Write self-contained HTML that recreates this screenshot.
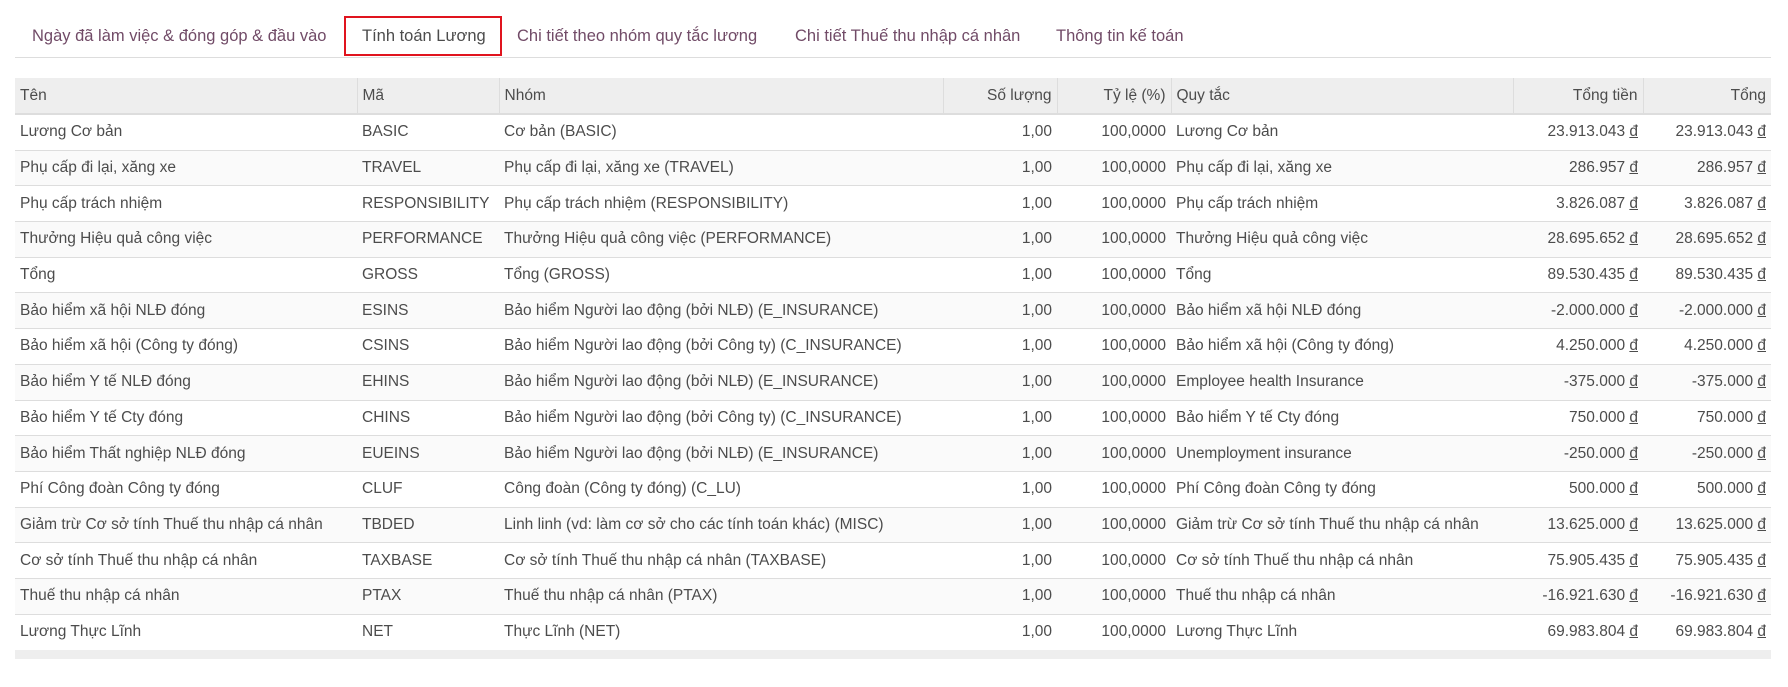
<!DOCTYPE html>
<html><head><meta charset="utf-8"><style>
body{margin:0;background:#fff;font-family:"Liberation Sans","Noto Sans CJK SC",sans-serif;font-size:15.5px;color:#4c4c4c;width:1788px;height:687px;overflow:hidden;position:relative}
.tabs{position:absolute;left:15px;top:0;width:1756px;height:57px;border-bottom:1px solid #ddd}
.tab{position:absolute;top:27px;color:#714b67;white-space:nowrap;font-size:16.5px}
.box{position:absolute;left:344px;top:16px;width:154px;height:36px;border:2px solid #e0141e}
table{position:absolute;left:15px;top:78px;width:1756px;border-collapse:collapse;table-layout:fixed}
th{background:#eee;font-weight:normal;text-align:left;height:35px;padding:0 5px;border-left:1px solid #ddd;border-bottom:2px solid #ddd;white-space:nowrap}
th:first-child{border-left:none}
td{height:34.7px;padding:0 5px;border-top:1px solid #ddd;white-space:nowrap;overflow:hidden}
tr:nth-child(odd) td{background:#fafafa}
.r{text-align:right}
u{text-decoration:underline}
.foot{position:absolute;left:15px;top:650px;width:1756px;height:9px;background:#eee}
</style></head><body>
<div class="tabs"></div>
<div class="tab" style="left:32px">Ngày đã làm việc &amp; đóng góp &amp; đầu vào</div>
<div class="tab" style="left:362px;color:#4c4c4c">Tính toán Lương</div>
<div class="tab" style="left:517px">Chi tiết theo nhóm quy tắc lương</div>
<div class="tab" style="left:795px">Chi tiết Thuế thu nhập cá nhân</div>
<div class="tab" style="left:1056px">Thông tin kế toán</div>
<div class="box"></div>
<table>
<colgroup><col style="width:342px"><col style="width:142px"><col style="width:444px"><col style="width:114px"><col style="width:114px"><col style="width:342px"><col style="width:130px"><col style="width:128px"></colgroup>
<tr><th>Tên</th><th>Mã</th><th>Nhóm</th><th class="r">Số lượng</th><th class="r">Tỷ lệ (%)</th><th>Quy tắc</th><th class="r">Tổng tiền</th><th class="r">Tổng</th></tr>
<tr><td>Lương Cơ bản</td><td>BASIC</td><td>Cơ bản (BASIC)</td><td class="r">1,00</td><td class="r">100,0000</td><td>Lương Cơ bản</td><td class="r">23.913.043 <u>đ</u></td><td class="r">23.913.043 <u>đ</u></td></tr>
<tr><td>Phụ cấp đi lại, xăng xe</td><td>TRAVEL</td><td>Phụ cấp đi lại, xăng xe (TRAVEL)</td><td class="r">1,00</td><td class="r">100,0000</td><td>Phụ cấp đi lại, xăng xe</td><td class="r">286.957 <u>đ</u></td><td class="r">286.957 <u>đ</u></td></tr>
<tr><td>Phụ cấp trách nhiệm</td><td>RESPONSIBILITY</td><td>Phụ cấp trách nhiệm (RESPONSIBILITY)</td><td class="r">1,00</td><td class="r">100,0000</td><td>Phụ cấp trách nhiệm</td><td class="r">3.826.087 <u>đ</u></td><td class="r">3.826.087 <u>đ</u></td></tr>
<tr><td>Thưởng Hiệu quả công việc</td><td>PERFORMANCE</td><td>Thưởng Hiệu quả công việc (PERFORMANCE)</td><td class="r">1,00</td><td class="r">100,0000</td><td>Thưởng Hiệu quả công việc</td><td class="r">28.695.652 <u>đ</u></td><td class="r">28.695.652 <u>đ</u></td></tr>
<tr><td>Tổng</td><td>GROSS</td><td>Tổng (GROSS)</td><td class="r">1,00</td><td class="r">100,0000</td><td>Tổng</td><td class="r">89.530.435 <u>đ</u></td><td class="r">89.530.435 <u>đ</u></td></tr>
<tr><td>Bảo hiểm xã hội NLĐ đóng</td><td>ESINS</td><td>Bảo hiểm Người lao động (bởi NLĐ) (E_INSURANCE)</td><td class="r">1,00</td><td class="r">100,0000</td><td>Bảo hiểm xã hội NLĐ đóng</td><td class="r">-2.000.000 <u>đ</u></td><td class="r">-2.000.000 <u>đ</u></td></tr>
<tr><td>Bảo hiểm xã hội (Công ty đóng)</td><td>CSINS</td><td>Bảo hiểm Người lao động (bởi Công ty) (C_INSURANCE)</td><td class="r">1,00</td><td class="r">100,0000</td><td>Bảo hiểm xã hội (Công ty đóng)</td><td class="r">4.250.000 <u>đ</u></td><td class="r">4.250.000 <u>đ</u></td></tr>
<tr><td>Bảo hiểm Y tế NLĐ đóng</td><td>EHINS</td><td>Bảo hiểm Người lao động (bởi NLĐ) (E_INSURANCE)</td><td class="r">1,00</td><td class="r">100,0000</td><td>Employee health Insurance</td><td class="r">-375.000 <u>đ</u></td><td class="r">-375.000 <u>đ</u></td></tr>
<tr><td>Bảo hiểm Y tế Cty đóng</td><td>CHINS</td><td>Bảo hiểm Người lao động (bởi Công ty) (C_INSURANCE)</td><td class="r">1,00</td><td class="r">100,0000</td><td>Bảo hiểm Y tế Cty đóng</td><td class="r">750.000 <u>đ</u></td><td class="r">750.000 <u>đ</u></td></tr>
<tr><td>Bảo hiểm Thất nghiệp NLĐ đóng</td><td>EUEINS</td><td>Bảo hiểm Người lao động (bởi NLĐ) (E_INSURANCE)</td><td class="r">1,00</td><td class="r">100,0000</td><td>Unemployment insurance</td><td class="r">-250.000 <u>đ</u></td><td class="r">-250.000 <u>đ</u></td></tr>
<tr><td>Phí Công đoàn Công ty đóng</td><td>CLUF</td><td>Công đoàn (Công ty đóng) (C_LU)</td><td class="r">1,00</td><td class="r">100,0000</td><td>Phí Công đoàn Công ty đóng</td><td class="r">500.000 <u>đ</u></td><td class="r">500.000 <u>đ</u></td></tr>
<tr><td>Giảm trừ Cơ sở tính Thuế thu nhập cá nhân</td><td>TBDED</td><td>Linh linh (vd: làm cơ sở cho các tính toán khác) (MISC)</td><td class="r">1,00</td><td class="r">100,0000</td><td>Giảm trừ Cơ sở tính Thuế thu nhập cá nhân</td><td class="r">13.625.000 <u>đ</u></td><td class="r">13.625.000 <u>đ</u></td></tr>
<tr><td>Cơ sở tính Thuế thu nhập cá nhân</td><td>TAXBASE</td><td>Cơ sở tính Thuế thu nhập cá nhân (TAXBASE)</td><td class="r">1,00</td><td class="r">100,0000</td><td>Cơ sở tính Thuế thu nhập cá nhân</td><td class="r">75.905.435 <u>đ</u></td><td class="r">75.905.435 <u>đ</u></td></tr>
<tr><td>Thuế thu nhập cá nhân</td><td>PTAX</td><td>Thuế thu nhập cá nhân (PTAX)</td><td class="r">1,00</td><td class="r">100,0000</td><td>Thuế thu nhập cá nhân</td><td class="r">-16.921.630 <u>đ</u></td><td class="r">-16.921.630 <u>đ</u></td></tr>
<tr><td>Lương Thực Lĩnh</td><td>NET</td><td>Thực Lĩnh (NET)</td><td class="r">1,00</td><td class="r">100,0000</td><td>Lương Thực Lĩnh</td><td class="r">69.983.804 <u>đ</u></td><td class="r">69.983.804 <u>đ</u></td></tr>
</table>
<div class="foot"></div>
</body></html>
